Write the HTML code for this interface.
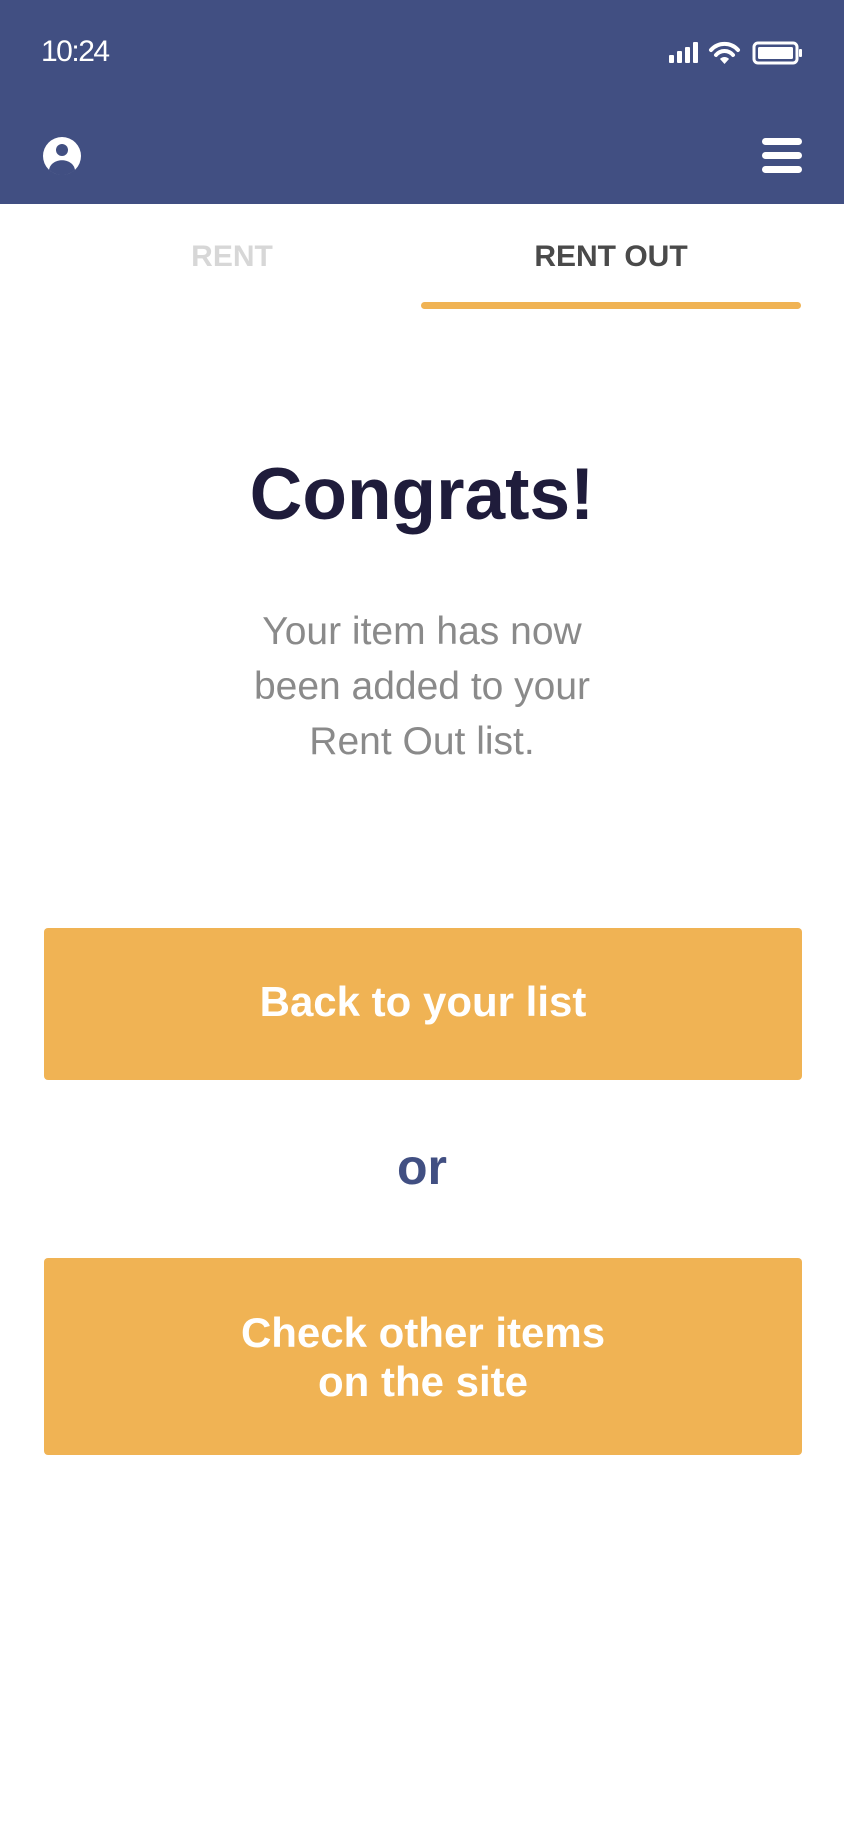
<!DOCTYPE html>
<html><head><meta charset="utf-8"><style>
*{margin:0;padding:0;box-sizing:border-box}
body{width:844px;height:1830px;background:#fff;font-family:"Liberation Sans",sans-serif;position:relative;overflow:hidden}
.hdr{position:absolute;left:0;top:0;width:844px;height:204px;background:#414f82}
.abs{position:absolute}
.tab{position:absolute;top:240px;font-weight:bold;font-size:30px;text-align:center;width:380px}
.btn{position:absolute;left:44px;width:758px;background:#f0b354;border-radius:4px;color:#fff;font-weight:bold;font-size:42px;text-align:center;display:flex;align-items:center;justify-content:center;line-height:49px}
</style></head><body>
<div class="hdr">
<div class="abs" style="left:41px;top:35px;color:#fff;font-size:30px;font-weight:300;letter-spacing:-1.5px">10:24</div>
<svg class="abs" style="left:668px;top:40px" width="136" height="26" viewBox="0 0 136 26">
<rect x="1" y="15" width="5" height="8" rx="1" fill="#fff"/>
<rect x="9" y="11" width="5" height="12" rx="1" fill="#fff"/>
<rect x="17" y="7" width="5" height="16" rx="1" fill="#fff"/>
<rect x="25" y="2" width="5" height="21" rx="1" fill="#fff"/>
<path d="M43 10 A18 18 0 0 1 70 10" stroke="#fff" stroke-width="4" fill="none" stroke-linecap="round"/>
<path d="M48 15 A11 11 0 0 1 65 15" stroke="#fff" stroke-width="4" fill="none" stroke-linecap="round"/>
<path d="M52 19 L56.5 24 L61 19 A6 6 0 0 0 52 19Z" fill="#fff"/>
<rect x="86" y="3" width="43" height="20" rx="4" stroke="#fff" stroke-width="3" fill="none"/>
<rect x="90" y="7" width="35" height="12" rx="1.5" fill="#fff"/>
<rect x="131" y="9" width="3" height="8" rx="1" fill="#fff"/>
</svg>
<svg class="abs" style="left:43px;top:137px" width="38" height="38" viewBox="0 0 38 38">
<circle cx="19" cy="19" r="19" fill="#fff"/>
<circle cx="19" cy="13" r="6" fill="#414f82"/>
<path d="M6 33 C8 20 30 20 32 33 A19 19 0 0 1 6 33Z" fill="#414f82"/>
</svg>
<svg class="abs" style="left:762px;top:137px" width="40" height="38" viewBox="0 0 40 38">
<rect x="0" y="1" width="40" height="7" rx="3.5" fill="#fff"/>
<rect x="0" y="15" width="40" height="7" rx="3.5" fill="#fff"/>
<rect x="0" y="29" width="40" height="7" rx="3.5" fill="#fff"/>
</svg>
</div>
<div class="tab" style="left:42px;color:#d7d7d7">RENT</div>
<div class="tab" style="left:421px;color:#4a4a4a">RENT OUT</div>
<div class="abs" style="left:421px;top:302px;width:380px;height:7px;background:#f0b354;border-radius:4px"></div>
<div class="abs" style="left:0;width:844px;top:453px;text-align:center;font-weight:bold;font-size:73px;color:#1f1c3b">Congrats!</div>
<div class="abs" style="left:0;width:844px;top:604px;text-align:center;font-size:39px;line-height:55px;color:#8a8a8a">Your item has now<br>been added to your<br>Rent Out list.</div>
<div class="btn" style="top:928px;height:152px;padding-bottom:6px">Back to your list</div>
<div class="abs" style="left:0;width:844px;top:1138px;text-align:center;font-weight:bold;font-size:50px;color:#414f82">or</div>
<div class="btn" style="top:1258px;height:197px">Check other items<br>on the site</div>
</body></html>
